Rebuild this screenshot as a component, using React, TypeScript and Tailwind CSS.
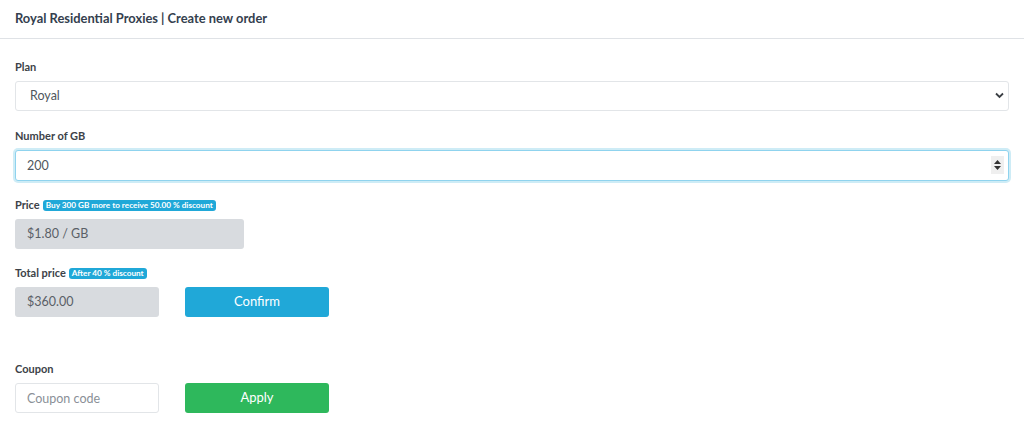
import React, { useState } from 'react';

const font = { fontFamily: 'Lato, "Open Sans", sans-serif' };

const Badge: React.FC<{ children: React.ReactNode }> = ({ children }) => (
  <span className="ml-[3px] inline-flex h-[11px] items-center rounded-[3px] bg-[#20a8d8] px-[3px] text-[8.2px] font-bold leading-none text-white">
    {children}
  </span>
);

const Label: React.FC<{ children: React.ReactNode }> = ({ children }) => (
  <div className="mb-[6px] flex h-[16px] items-center text-[11px] font-bold text-[#3c4248]">{children}</div>
);

export default function App() {
  const [gb, setGb] = useState('200');
  const [coupon, setCoupon] = useState('');

  return (
    <div className="h-[434px] w-[1024px] bg-white" style={font}>
      <div className="flex h-[39px] items-center border-b border-[#dfe2e6] px-[15px]">
        <h1 className="text-[12.9px] font-bold text-[#34404e]">Royal Residential Proxies | Create new order</h1>
      </div>

      <div className="px-[15px] pt-[20px]">
        <Label>Plan</Label>
        <div className="relative w-[994px]">
          <select className="h-[30px] w-full appearance-none rounded-[3px] border border-[#e2e5e8] bg-white pl-[14px] text-[12.5px] text-[#4f565d] outline-none">
            <option>Royal</option>
          </select>
          <svg className="pointer-events-none absolute right-[5px] top-[11px]" width="9" height="7" viewBox="0 0 9 7">
            <path d="M1 1.5 L4.5 5 L8 1.5" fill="none" stroke="#3b3f44" strokeWidth="1.8" />
          </svg>
        </div>

        <div className="mt-[17px]">
          <Label>Number of GB</Label>
          <div className="relative w-[994px]">
            <input
              value={gb}
              onChange={(e) => setGb(e.target.value)}
              className="h-[31px] w-full rounded-[3px] border border-[#8fd3ee] bg-white pl-[11px] text-[12.5px] text-[#4f565d] shadow-[0_0_0_2px_rgba(32,168,216,0.22)] outline-none"
            />
            <div className="pointer-events-none absolute right-[5px] top-[6px] flex h-[18px] w-[13px] flex-col items-center justify-center gap-[2px] bg-[#efefef]">
              <svg width="7" height="4" viewBox="0 0 7 4"><path d="M0 4 L3.5 0 L7 4 Z" fill="#333" /></svg>
              <svg width="7" height="4" viewBox="0 0 7 4"><path d="M0 0 L3.5 4 L7 0 Z" fill="#333" /></svg>
            </div>
          </div>
        </div>

        <div className="mt-[16px]">
          <Label>
            Price <Badge>Buy 300 GB more to receive 50.00 % discount</Badge>
          </Label>
          <div className="flex h-[30px] w-[229px] items-center rounded-[3px] bg-[#d8dbdf] pl-[12px] text-[12.5px] text-[#5a6067]">
            $1.80 / GB
          </div>
        </div>

        <div className="mt-[16px]">
          <Label>
            Total price <Badge>After 40 % discount</Badge>
          </Label>
          <div className="flex gap-[26px]">
            <div className="flex h-[30px] w-[144px] items-center rounded-[3px] bg-[#d8dbdf] pl-[12px] text-[12.5px] text-[#5a6067]">
              $360.00
            </div>
            <button className="h-[30px] w-[144px] rounded-[3px] bg-[#20a8d8] text-[13px] text-white">Confirm</button>
          </div>
        </div>

        <div className="mt-[44px]">
          <Label>Coupon</Label>
          <div className="flex gap-[26px]">
            <input
              value={coupon}
              onChange={(e) => setCoupon(e.target.value)}
              placeholder="Coupon code"
              className="h-[30px] w-[144px] rounded-[3px] border border-[#e2e5e8] bg-white pl-[11px] text-[12.5px] text-[#4a4f55] outline-none placeholder:text-[#8a9097]"
            />
            <button className="h-[30px] w-[144px] rounded-[3px] bg-[#2eb85c] text-[13px] text-white">Apply</button>
          </div>
        </div>
      </div>
    </div>
  );
}
